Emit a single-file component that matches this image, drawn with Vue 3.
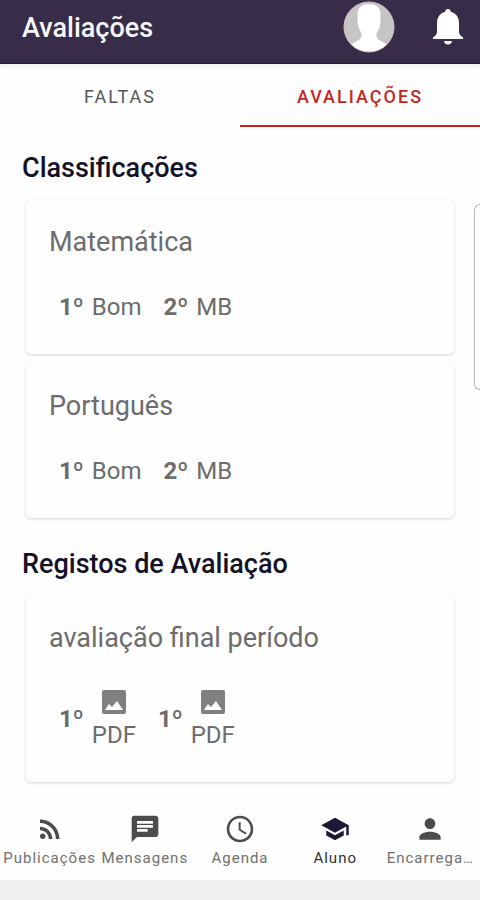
<script setup>
import { ref } from 'vue'

const tabs = ['Faltas', 'Avaliações']
const activeTab = ref('Avaliações')

const subjects = [
  { name: 'Matemática', grades: [{ term: '1º', value: 'Bom' }, { term: '2º', value: 'MB' }] },
  { name: 'Português', grades: [{ term: '1º', value: 'Bom' }, { term: '2º', value: 'MB' }] }
]

const records = [
  { name: 'avaliação final período', files: [{ id: 1, term: '1º', type: 'PDF' }, { id: 2, term: '1º', type: 'PDF' }] }
]

const navItems = [
  {
    label: 'Publicações',
    size: 'medium',
    icon: 'M6.18 15.64a2.18 2.18 0 1 1 0 4.36 2.18 2.18 0 0 1 0-4.36zM4 4.44v2.83c7.03 0 12.73 5.7 12.73 12.73h2.83c0-8.59-6.97-15.56-15.56-15.56zm0 5.66v2.83c3.9 0 7.07 3.17 7.07 7.07h2.83c0-5.47-4.43-9.9-9.9-9.9z'
  },
  {
    label: 'Mensagens',
    size: 'large',
    icon: 'M20 2H4c-1.1 0-1.99.9-1.99 2L2 22l4-4h14c1.1 0 2-.9 2-2V4c0-1.1-.9-2-2-2zM6 9h12v2H6V9zm8 5H6v-2h8v2zm4-6H6V6h12v2z'
  },
  {
    label: 'Agenda',
    size: 'large',
    icon: 'M11.99 2C6.47 2 2 6.48 2 12s4.47 10 9.99 10C17.52 22 22 17.52 22 12S17.52 2 11.99 2zM12 20c-4.42 0-8-3.58-8-8s3.58-8 8-8 8 3.58 8 8-3.58 8-8 8zm.5-13H11v6l5.25 3.15.75-1.23-4.5-2.67z'
  },
  {
    label: 'Aluno',
    size: 'medium',
    icon: 'M5 13.18v4L12 21l7-3.82v-4L12 17l-7-3.82zM12 3L1 9l11 6 9-4.91V17h2V9L12 3z'
  },
  {
    label: 'Encarrega…',
    size: 'large',
    icon: 'M12 12c2.21 0 4-1.79 4-4s-1.79-4-4-4-4 1.79-4 4 1.79 4 4 4zm0 2c-2.67 0-8 1.34-8 4v2h16v-2c0-2.66-5.33-4-8-4z'
  }
]
const activeNav = ref('Aluno')
</script>

<template>
  <div class="screen">
    <header class="topbar">
      <h1 class="title">Avaliações</h1>
      <button class="icon-button" type="button" aria-label="Perfil">
        <svg class="avatar" viewBox="0 0 52 52">
          <defs>
            <clipPath id="avatar-clip"><circle cx="26" cy="26" r="25" /></clipPath>
          </defs>
          <circle cx="26" cy="26" r="25" fill="#c6c4c5" />
          <path
            clip-path="url(#avatar-clip)"
            fill="#ffffff"
            d="M26 3c-8 0-11.500 4-11.500 11 0 4 0 7 .5 10 .8 4 2.200 6 3.500 8 .3 4-.5 5.500-3.500 7.500-3 2-6 3-8 5.500v7h38v-7c-2-2.500-5-3.500-8-5.500-3-2-3.800-3.500-3.500-7.500 1.300-2 2.700-4 3.500-8 .5-3 .5-6 .5-10 0-7-3.500-11-11.500-11z"
          />
          <circle cx="26" cy="26" r="25" fill="none" stroke="#d9bfc4" stroke-width="1" />
        </svg>
      </button>
      <button class="icon-button" type="button" aria-label="Notificações">
        <svg class="bell" viewBox="0 0 30 36" fill="#ffffff">
          <path d="M15 0c-1.700 0-2.700 1.100-2.900 2.800C7 4.200 4 8.500 4 14v8c0 3-1 4.500-4 6.500V30h30v-1.500c-3-2-4-3.500-4-6.500v-8c0-5.500-3-9.800-8.100-11.200C17.700 1.100 16.700 0 15 0z" />
          <path d="M11 32h8c-.3 2.300-1.900 3.600-4 3.600s-3.700-1.300-4-3.600z" />
        </svg>
      </button>
    </header>

    <nav class="tabs" aria-label="Secções">
      <button
        v-for="tab in tabs"
        :key="tab"
        type="button"
        class="tab"
        :class="{ active: tab === activeTab }"
        @click="activeTab = tab"
      >
        {{ tab }}
      </button>
    </nav>

    <main class="content">
      <section class="group">
        <h2 class="heading">Classificações</h2>
        <article v-for="subject in subjects" :key="subject.name" class="card">
          <h3 class="card-title">{{ subject.name }}</h3>
          <div class="entries">
            <span v-for="grade in subject.grades" :key="grade.term" class="entry">
              <b class="term">{{ grade.term }}</b>
              <span>{{ grade.value }}</span>
            </span>
          </div>
        </article>
      </section>

      <section class="group">
        <h2 class="heading">Registos de Avaliação</h2>
        <article v-for="record in records" :key="record.name" class="card">
          <h3 class="card-title">{{ record.name }}</h3>
          <div class="entries files">
            <span v-for="file in record.files" :key="file.id" class="entry">
              <b class="term">{{ file.term }}</b>
              <a class="file" href="#">
                <svg class="file-icon" viewBox="0 0 24 24">
                  <rect width="24" height="24" rx="2" fill="#808080" />
                  <path fill="#ffffff" d="M3 20l4-6 3 3 5-6 6 9z" />
                </svg>
                <span>{{ file.type }}</span>
              </a>
            </span>
          </div>
        </article>
      </section>
      <div class="edge-handle"></div>
    </main>

    <nav class="bottom-nav" aria-label="Principal">
      <button
        v-for="item in navItems"
        :key="item.label"
        type="button"
        class="nav-item"
        :class="{ active: item.label === activeNav }"
        @click="activeNav = item.label"
      >
        <span class="nav-icon">
          <svg :class="item.size" viewBox="0 0 24 24" fill="currentColor"><path :d="item.icon" /></svg>
        </span>
        <span class="nav-label">{{ item.label }}</span>
      </button>
    </nav>
    <div class="system-bar"></div>
  </div>
</template>

<style>
body {
  background: #fefefe;
}
</style>

<style scoped>
.screen {
  display: flex;
  flex-direction: column;
  min-height: 100vh;
  font-family: Roboto, "Liberation Sans", sans-serif;
  color: #6c6c6c;
}

button {
  border: 0;
  padding: 0;
  background: none;
  font: inherit;
  color: inherit;
  cursor: pointer;
}

h1,
h2,
h3 {
  margin: 0;
}

svg {
  display: block;
}

.topbar {
  display: flex;
  align-items: center;
  gap: 38px;
  padding: 0 17px 9px 22px;
  height: 54px;
  background: #372d48;
  border-bottom: 1px solid #221b36;
  box-sizing: content-box;
  box-shadow: 0 3px 3px #f1f1f6;
}

.title {
  flex: 1;
  font-size: 27px;
  font-weight: 500;
  line-height: 34px;
  padding-top: 2px;
  color: #f7f6f9;
}

.avatar {
  width: 52px;
  height: 52px;
}

.bell {
  width: 30px;
  height: 36px;
}

.tabs {
  display: flex;
}

.tab {
  flex: 1;
  height: 63px;
  padding-top: 4px;
  border-bottom: 2px solid transparent;
  font-size: 18px;
  letter-spacing: 2px;
  text-transform: uppercase;
  color: #555555;
}

.tab.active {
  border-color: #c5221f;
  color: #c5281f;
  font-weight: 500;
}

.content {
  position: relative;
  flex: 1;
  padding: 25px 26px 12px;
}

.group {
  display: flex;
  flex-direction: column;
  gap: 10px;
}

.group + .group {
  margin-top: 30px;
}

.heading {
  margin: 0 -4px 6px;
  font-size: 27px;
  font-weight: 500;
  line-height: 32px;
  color: #141127;
}

.card {
  padding: 24px 23px 30px;
  border-radius: 5px;
  background: #fefefe;
  box-shadow: 0 1px 3px #d2d2d2;
}

.card-title {
  font-size: 27px;
  font-weight: 400;
  line-height: 36px;
}

.entries {
  display: flex;
  gap: 22px;
  padding: 30px 10px 0;
  font-size: 24px;
  line-height: 34px;
}

.files {
  padding-top: 34px;
}

.files .term {
  padding-bottom: 4px;
}

.entry {
  display: flex;
  align-items: center;
  gap: 8px;
}

.term {
  font-weight: 700;
}

.file {
  display: flex;
  flex-direction: column;
  align-items: center;
  gap: 4px;
  color: inherit;
  text-decoration: none;
}

.file-icon {
  width: 24px;
  height: 24px;
}

.edge-handle {
  position: absolute;
  top: 77px;
  right: 0;
  width: 6px;
  height: 186px;
  box-sizing: border-box;
  border: 1px solid #b5b5b5;
  border-right: 0;
  border-radius: 6px 0 0 6px;
}

.bottom-nav {
  display: flex;
  padding: 17px 2px 12px;
}

.nav-item {
  display: flex;
  flex: 1;
  flex-direction: column;
  align-items: center;
  gap: 2px;
  min-width: 0;
  color: #4c4c4c;
}

.nav-icon {
  display: grid;
  place-items: center;
  height: 34px;
}

.medium {
  width: 30px;
  height: 30px;
}

.large {
  width: 32px;
  height: 32px;
}

.nav-label {
  max-width: 100%;
  overflow: hidden;
  font-size: 15px;
  line-height: 20px;
  letter-spacing: 1px;
  text-overflow: ellipsis;
  white-space: nowrap;
  color: #707070;
}

.nav-item.active {
  color: #1d1738;
}

.nav-item.active .nav-label {
  color: #2f2f38;
}

.system-bar {
  height: 20px;
  background: #f0f0f0;
}
</style>
